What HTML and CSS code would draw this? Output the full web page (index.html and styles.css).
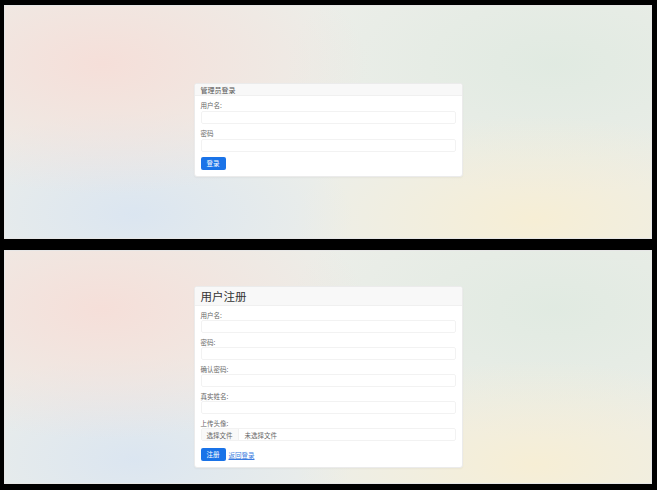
FILE: index.html
```html
<!DOCTYPE html>
<html lang="zh">
<head>
  <meta charset="UTF-8">
  <title>登录 / 注册</title>
  <link rel="stylesheet" href="styles.css">
</head>
<body>

  <div class="shot shot-login">
    <div class="card">
      <div class="card-header small">管理员登录</div>
      <div class="card-body">
        <div class="field">
          <label>用户名:</label>
          <div class="input"></div>
        </div>
        <div class="field">
          <label>密码</label>
          <div class="input"></div>
        </div>
        <div class="actions">
          <span class="btn">登录</span>
        </div>
      </div>
    </div>
  </div>

  <div class="shot shot-register">
    <div class="card">
      <div class="card-header big">用户注册</div>
      <div class="card-body">
        <div class="field">
          <label>用户名:</label>
          <div class="input"></div>
        </div>
        <div class="field">
          <label>密码:</label>
          <div class="input"></div>
        </div>
        <div class="field">
          <label>确认密码:</label>
          <div class="input"></div>
        </div>
        <div class="field">
          <label>真实姓名:</label>
          <div class="input"></div>
        </div>
        <div class="field file-field">
          <label>上传头像:</label>
          <div class="input file">
            <span class="file-btn">选择文件</span>
            <span class="file-name">未选择文件</span>
          </div>
        </div>
        <div class="actions">
          <span class="btn">注册</span>
          <a class="link" href="#">返回登录</a>
        </div>
      </div>
    </div>
  </div>

</body>
</html>
```

FILE: styles.css
```css
* {
  margin: 0;
  padding: 0;
  box-sizing: border-box;
}
body {
  font-family: "Noto Sans CJK SC", "Noto Sans", sans-serif;
  background: #000;
  color: #555;
  height: 490px;
  padding: 5px 5px 0 4px;
  display: flex;
  flex-direction: column;
  gap: 11px;
}
.shot {
  height: 234px;
  border: 1px solid #e6e6e6;
  display: flex;
  justify-content: center;
  background:
    radial-gradient(ellipse 55% 75% at 15% 25%, rgba(246, 222, 216, 0.95), transparent 75%),
    radial-gradient(ellipse 45% 60% at 20% 90%, rgba(218, 229, 241, 0.95), transparent 75%),
    radial-gradient(ellipse 50% 60% at 82% 92%, rgba(247, 238, 212, 0.95), transparent 75%),
    radial-gradient(ellipse 55% 75% at 85% 25%, rgba(224, 234, 225, 0.95), transparent 75%),
    #eceee9;
}
.shot-login {
  padding-top: 77px;
}
.shot-register {
  padding-top: 35px;
}
.card {
  width: 269px;
  align-self: flex-start;
  background: #fff;
  border: 1px solid #ebebeb;
  border-radius: 3px;
  box-shadow: 0 1px 2px rgba(0, 0, 0, 0.04);
  overflow: hidden;
}
.card-header {
  background: #f8f8f8;
  border-bottom: 1px solid #f0f0f0;
  padding: 0 6px;
  color: #555;
}
.card-header.small {
  height: 12px;
  font-size: 7px;
  line-height: 12px;
}
.card-header.big {
  height: 19px;
  font-size: 11.5px;
  line-height: 19px;
  color: #333;
}
.card-body {
  padding: 5px 6px 6px;
}
.field {
  margin-bottom: 5px;
}
.field label {
  display: block;
  font-size: 6.5px;
  line-height: 8px;
  margin-bottom: 1px;
  color: #666;
}
.shot-login .field label {
  margin-bottom: 2px;
}
.input {
  height: 13px;
  background: #fff;
  border: 1px solid #f2f2f2;
  border-radius: 2px;
}
.file-field {
  margin-bottom: 7px;
}
.input.file {
  display: flex;
  align-items: center;
  font-size: 6.5px;
  color: #666;
}
.file-btn {
  background: #f9f9f9;
  border-right: 1px solid #f0f0f0;
  height: 100%;
  display: flex;
  align-items: center;
  padding: 0 5px;
}
.file-name {
  padding-left: 6px;
}
.actions {
  display: flex;
  align-items: center;
  gap: 3px;
}
.btn {
  display: inline-block;
  background: #1a73e8;
  color: #fff;
  font-size: 6.5px;
  line-height: 12px;
  height: 13px;
  width: 25px;
  text-align: center;
  border-radius: 2px;
}
.link {
  color: #3a7be0;
  font-size: 6.5px;
  text-decoration: underline;
}
```
